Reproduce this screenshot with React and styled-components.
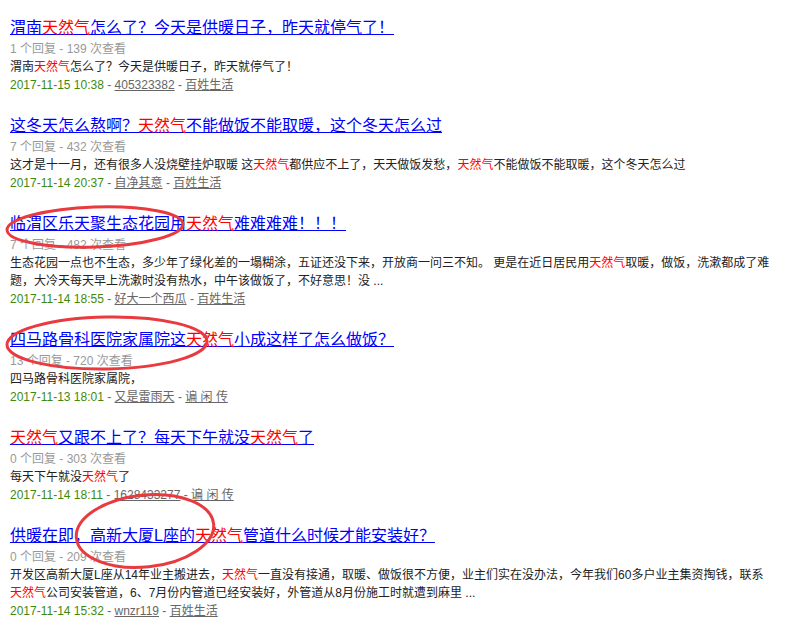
import React from "react";
import styled, { createGlobalStyle } from "styled-components";

const posts = [
  {
    title: "渭南天然气怎么了？今天是供暖日子，昨天就停气了！",
    replies: 1,
    views: 139,
    desc: "渭南天然气怎么了？今天是供暖日子，昨天就停气了！",
    date: "2017-11-15 10:38",
    user: "405323382",
    board: "百姓生活",
  },
  {
    title: "这冬天怎么熬啊？天然气不能做饭不能取暖，这个冬天怎么过",
    replies: 7,
    views: 432,
    desc: "这才是十一月，还有很多人没烧壁挂炉取暖 这天然气都供应不上了，天天做饭发愁，天然气不能做饭不能取暖，这个冬天怎么过",
    date: "2017-11-14 20:37",
    user: "自净其意",
    board: "百姓生活",
  },
  {
    title: "临渭区乐天聚生态花园用天然气难难难难！！！",
    replies: 7,
    views: 482,
    desc: "生态花园一点也不生态，多少年了绿化差的一塌糊涂，五证还没下来，开放商一问三不知。 更是在近日居民用天然气取暖，做饭，洗漱都成了难题，大冷天每天早上洗漱时没有热水，中午该做饭了，不好意思！没 ...",
    date: "2017-11-14 18:55",
    user: "好大一个西瓜",
    board: "百姓生活",
  },
  {
    title: "四马路骨科医院家属院这天然气小成这样了怎么做饭？",
    replies: 13,
    views: 720,
    desc: "四马路骨科医院家属院，",
    date: "2017-11-13 18:01",
    user: "又是雷雨天",
    board: "谝 闲 传",
  },
  {
    title: "天然气又跟不上了？每天下午就没天然气了",
    replies: 0,
    views: 303,
    desc: "每天下午就没天然气了",
    date: "2017-11-14 18:11",
    user: "1628433277",
    board: "谝 闲 传",
  },
  {
    title: "供暖在即，高新大厦L座的天然气管道什么时候才能安装好？",
    replies: 0,
    views: 209,
    desc: "开发区高新大厦L座从14年业主搬进去，天然气一直没有接通，取暖、做饭很不方便，业主们实在没办法，今年我们60多户业主集资掏钱，联系天然气公司安装管道，6、7月份内管道已经安装好，外管道从8月份施工时就遭到麻里 ...",
    date: "2017-11-14 15:32",
    user: "wnzr119",
    board: "百姓生活",
  },
];

// circled bits someone drew on the screenshot
const marks = [
  { cx: 95, cy: 227, rx: 88, ry: 20, rot: -2 },
  { cx: 107, cy: 343, rx: 100, ry: 26, rot: -1 },
  { cx: 145, cy: 531, rx: 69, ry: 36, rot: -6 },
];

const KEYWORD = "天然气";

function highlight(text) {
  const parts = text.split(KEYWORD);
  return parts.map((part, i) => (
    <React.Fragment key={i}>
      {part}
      {i < parts.length - 1 && <Keyword>{KEYWORD}</Keyword>}
    </React.Fragment>
  ));
}

function App() {
  return (
    <Page>
      <GlobalStyle />
      <List>
        {posts.map((p) => (
          <Item key={p.date + p.user}>
            <Title href="#">{highlight(p.title)}</Title>
            <Meta>
              {p.replies} 个回复 - {p.views} 次查看
            </Meta>
            <Desc>{highlight(p.desc)}</Desc>
            <Info>
              <DateText>{p.date}</DateText> - <UserLink href="#">{p.user}</UserLink> -{" "}
              <UserLink href="#">{p.board}</UserLink>
            </Info>
          </Item>
        ))}
      </List>
      <Marks width="811" height="633" viewBox="0 0 811 633">
        {marks.map((m, i) => (
          <ellipse
            key={i}
            cx={m.cx}
            cy={m.cy}
            rx={m.rx}
            ry={m.ry}
            transform={`rotate(${m.rot} ${m.cx} ${m.cy})`}
            fill="none"
            stroke="#e83a3f"
            strokeWidth="3"
          />
        ))}
      </Marks>
    </Page>
  );
}

const GlobalStyle = createGlobalStyle`
  html, body {
    margin: 0;
    padding: 0;
    background: #fff;
  }
  body {
    font-family: "Liberation Sans", "Noto Sans CJK SC", sans-serif;
  }
`;

const Page = styled.div`
  position: relative;
  width: 811px;
  min-height: 633px;
  overflow: hidden;
`;

const List = styled.ul`
  list-style: none;
  margin: 0;
  padding: 16px 0 0 10px;
  width: 765px;
  display: flex;
  flex-direction: column;
  gap: 20px;
`;

const Item = styled.li`
  display: flex;
  flex-direction: column;
  align-items: flex-start;
`;

const Title = styled.a`
  font-size: 16px;
  line-height: 24px;
  color: #0000ff;
  text-decoration: underline;
`;

const Keyword = styled.span`
  color: #ff0000;
`;

const Meta = styled.div`
  font-size: 12px;
  line-height: 18px;
  color: #999;
`;

const Desc = styled.div`
  font-size: 12px;
  line-height: 18px;
  color: #222;
`;

const Info = styled.div`
  font-size: 12px;
  line-height: 18px;
  color: #666;
`;

const DateText = styled.span`
  color: #3f8a0e;
`;

const UserLink = styled.a`
  color: #666;
  text-decoration: underline;
`;

const Marks = styled.svg`
  position: absolute;
  left: 0;
  top: 0;
  pointer-events: none;
`;

export default App;
